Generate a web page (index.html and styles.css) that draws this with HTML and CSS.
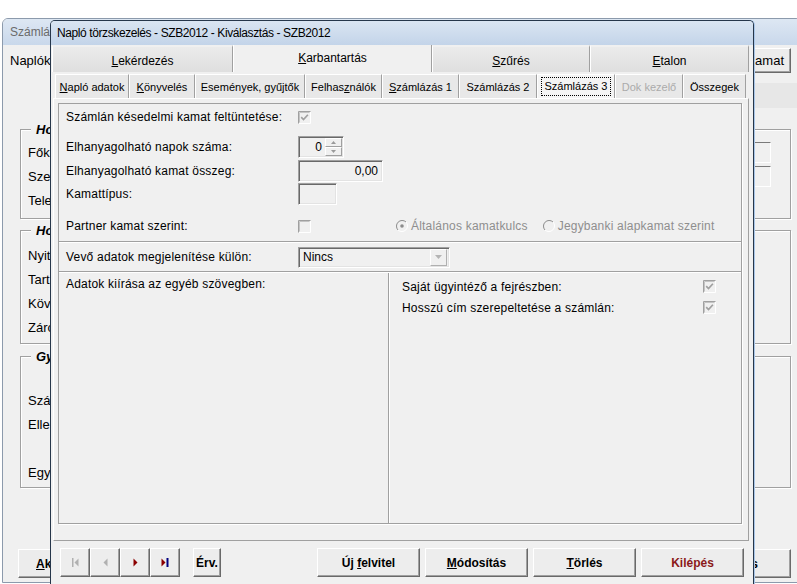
FILE: index.html
```html
<!DOCTYPE html>
<html lang="hu">
<head>
<meta charset="utf-8">
<title>Napló törzskezelés</title>
<link rel="stylesheet" href="styles.css">
</head>
<body>
<svg class="defs" aria-hidden="true">
  <defs>
    <symbol id="cbox" viewBox="0 0 13 13">
      <rect x="0" y="0" width="13" height="13" fill="#f0f0f0"/>
      <path d="M0.5 12.5V0.5H12.5" fill="none" stroke="#a0a0a0"/>
      <path d="M1.5 11.5V1.5H11.5" fill="none" stroke="#c4c4c4"/>
      <path d="M1 12.5H12.5V1" fill="none" stroke="#ffffff"/>
    </symbol>
    <symbol id="check" viewBox="0 0 13 13">
      <path d="M3.2 6.2l2.3 2.3 4.4-4.8" fill="none" stroke="#a0a0a0" stroke-width="1.7"/>
    </symbol>
    <symbol id="radio" viewBox="0 0 12 12">
      <path d="M10 2A5.66 5.66 0 0 0 2 10" fill="none" stroke="#8c8c8c"/>
      <path d="M2 10A5.66 5.66 0 0 0 10 2" fill="none" stroke="#ffffff"/>
    </symbol>
  </defs>
</svg>

<div class="bgwin">
  <div class="bg-title">Számláz</div>
  <div class="bg-top">
    <span class="bg-naplok">Naplók</span>
    <span class="bg-btn bg-kamat">Kamat</span>
  </div>
  <div class="bg-band"></div>
  <div class="gbox g1">
    <span class="glabel">Hoz</span>
    <div class="grows">
      <div class="grow"><span class="gl">Főkön</span><span class="gedit"></span></div>
      <div class="grow"><span class="gl">Szerk</span><span class="gedit"></span></div>
      <div class="grow"><span class="gl">Telef</span></div>
    </div>
  </div>
  <div class="gbox g2">
    <span class="glabel">Hoz</span>
    <div class="grows">
      <div class="grow"><span class="gl">Nyitó</span></div>
      <div class="grow"><span class="gl">Tarta</span></div>
      <div class="grow"><span class="gl">Köve</span></div>
      <div class="grow"><span class="gl">Záró</span></div>
    </div>
  </div>
  <div class="gbox g3">
    <span class="glabel">Gyű</span>
    <div class="grows">
      <div class="grow"><span class="gl">Szám</span></div>
      <div class="grow"><span class="gl">Ellen</span></div>
      <div class="grow"></div>
      <div class="grow"><span class="gl">Egyé</span></div>
    </div>
  </div>
  <div class="bg-btns">
    <span class="bg-btn bg-ak"><span><u>A</u>ktuális</span></span>
    <span class="bg-btn bg-kil"><span>Mentés</span></span>
  </div>
</div>

<div class="dialog">
  <div class="d-title">Napló törzskezelés - SZB2012 - Kiválasztás - SZB2012</div>

  <div class="tabs1">
    <div class="t1"><span><u>L</u>ekérdezés</span></div>
    <div class="t1 sel"><span><u>K</u>arbantartás</span></div>
    <div class="t1"><span><u>S</u>zűrés</span></div>
    <div class="t1"><span><u>E</u>talon</span></div>
  </div>

  <div class="tabs2">
    <div class="t2"><span><u>N</u>apló adatok</span></div>
    <div class="t2"><span><u>K</u>önyvelés</span></div>
    <div class="t2"><span>Események, gyűjtők</span></div>
    <div class="t2"><span>Felhas<u>z</u>nálók</span></div>
    <div class="t2"><span><u>S</u>zámlázás 1</span></div>
    <div class="t2"><span>Számlázás 2</span></div>
    <div class="t2 sel"><span>Számlázás 3</span></div>
    <div class="t2 dis"><span>Dok kezelő</span></div>
    <div class="t2"><span>Összegek</span></div>
  </div>

  <div class="page">
    <div class="panel">
      <div class="row r1">
        <span class="lbl">Számlán késedelmi kamat feltüntetése:</span>
        <svg class="cb" viewBox="0 0 13 13"><use href="#cbox"/><use href="#check"/></svg>
      </div>
      <div class="row r2">
        <span class="lbl">Elhanyagolható napok száma:</span>
        <span class="sunk spin">
          <span class="val">0</span>
          <span class="spbtns">
            <span class="spb"><svg width="5" height="3" viewBox="0 0 5 3"><path d="M0 3L2.5 0L5 3Z" fill="#9a9a9a"/></svg></span>
            <span class="spb"><svg width="5" height="3" viewBox="0 0 5 3"><path d="M0 0L2.5 3L5 0Z" fill="#9a9a9a"/></svg></span>
          </span>
        </span>
      </div>
      <div class="row r3">
        <span class="lbl">Elhanyagolható kamat összeg:</span>
        <span class="sunk edit">0,00</span>
      </div>
      <div class="row r4">
        <span class="lbl">Kamattípus:</span>
        <span class="sunk box"></span>
      </div>
      <div class="row r5">
        <span class="lbl">Partner kamat szerint:</span>
        <svg class="cb" viewBox="0 0 13 13"><use href="#cbox"/></svg>
        <span class="radios">
          <span class="ropt"><svg class="rd" viewBox="0 0 12 12"><use href="#radio"/><circle cx="6" cy="6" r="1.8" fill="#8c8c8c"/></svg><span>Általános kamatkulcs</span></span>
          <span class="ropt r2nd"><svg class="rd" viewBox="0 0 12 12"><use href="#radio"/></svg><span>Jegybanki alapkamat szerint</span></span>
        </span>
      </div>
      <div class="sep"></div>
      <div class="row r6">
        <span class="lbl">Vevő adatok megjelenítése külön:</span>
        <span class="sunk combo">
          <span>Nincs</span>
          <span class="ddbtn"><svg width="7" height="4" viewBox="0 0 7 4"><path d="M0 0H7L3.5 4Z" fill="#b4b4b4"/></svg></span>
        </span>
      </div>
      <div class="sep sep2"></div>
      <div class="lower">
        <div class="lower-left">Adatok kiírása az egyéb szövegben:</div>
        <div class="lower-right">
          <div class="crow">
            <span class="clbl">Saját ügyintéző a fejrészben:</span>
            <svg class="cb" viewBox="0 0 13 13"><use href="#cbox"/><use href="#check"/></svg>
          </div>
          <div class="crow">
            <span class="clbl">Hosszú cím szerepeltetése a számlán:</span>
            <svg class="cb" viewBox="0 0 13 13"><use href="#cbox"/><use href="#check"/></svg>
          </div>
        </div>
      </div>
    </div>
  </div>

  <div class="bar">
    <span class="btn nav"><svg width="7" height="9" viewBox="0 0 7 9"><rect x="0" y="0" width="1.5" height="9" fill="#b0b0b0"/><path d="M6.5 0.5V8.5L2.5 4.5Z" fill="#b0b0b0"/></svg></span>
    <span class="btn nav"><svg width="5" height="9" viewBox="0 0 5 9"><path d="M4.5 0.5V8.5L0.5 4.5Z" fill="#b0b0b0"/></svg></span>
    <span class="btn nav"><svg width="5" height="9" viewBox="0 0 5 9"><path d="M0.5 0.5V8.5L4.5 4.5Z" fill="#8b0000"/></svg></span>
    <span class="btn nav"><svg width="8" height="9" viewBox="0 0 8 9"><path d="M0.5 0.5V8.5L4.5 4.5Z" fill="#8b0000"/><rect x="5.5" y="0" width="2" height="9" fill="#000080"/></svg></span>
    <span class="btn erv"><span>Érv.</span></span>
    <span class="btn act first"><span>Új <u>f</u>elvitel</span></span>
    <span class="btn act"><span><u>M</u>ódosítás</span></span>
    <span class="btn act"><span><u>T</u>örlés</span></span>
    <span class="btn act exit"><span>Kilépés</span></span>
  </div>
</div>
</body>
</html>
```

FILE: styles.css
```css
* { box-sizing: border-box; margin: 0; padding: 0; }
html, body { width: 797px; height: 584px; overflow: hidden; }
body {
  position: relative;
  background: #ffffff;
  font-family: "Liberation Sans", Arial, sans-serif;
  font-size: 12px;
  color: #000;
}
u { text-decoration: underline; text-underline-offset: 1px; }
.defs { position: absolute; width: 0; height: 0; overflow: hidden; }

/* ---------- background window ---------- */
.bgwin {
  position: absolute;
  left: 2px;
  top: 18px;
  width: 800px;
  height: 565px;
  background: #f0f0f0;
  border: 1px solid #8c9aac;
  border-radius: 6px 6px 0 0;
  overflow: hidden;
}
.bg-title {
  height: 26px;
  line-height: 26px;
  padding-left: 7px;
  color: #6b6b6b;
  background: linear-gradient(#dde7f3, #c9d8eb);
}
.bg-top {
  height: 38px;
  display: flex;
  justify-content: space-between;
  align-items: flex-start;
  padding: 3px 10px 0 7px;
}
.bg-naplok { font-size: 13px; line-height: 25px; }
.bg-btn {
  display: flex;
  align-items: center;
  justify-content: center;
  background: #ececec;
  border: 1px solid;
  border-color: #ffffff #6a6a6a #6a6a6a #ffffff;
  box-shadow: inset -1px -1px #a0a0a0;
}
.bg-kamat {
  width: 90px;
  height: 25px;
  font-size: 13px;
  justify-content: flex-end;
  padding-right: 6px;
}
.bg-band {
  height: 25px;
  width: 50px;
  margin-left: auto;
  background: #e7e7e7;
}
.gbox {
  margin: 0 10px 0 17px;
  border: 1px solid #a0a0a0;
  box-shadow: inset 1px 1px #ffffff, 1px 1px #ffffff;
}
.glabel {
  display: block;
  width: max-content;
  margin: -8px 0 0 10px;
  padding: 0 4px 0 5px;
  background: #f0f0f0;
  font-weight: bold;
  font-style: italic;
  font-size: 13px;
  line-height: 15px;
}
.grow {
  display: flex;
  align-items: center;
  justify-content: space-between;
  height: 24px;
  padding-left: 7px;
  font-size: 13px;
}
.gl { white-space: nowrap; }
.g1 { margin-top: 21px; height: 90px; }
.g1 .grows { margin-top: 4px; }
.g1 .grow { height: 22px; margin-bottom: 2px; }
.g2 { margin-top: 11px; height: 114px; }
.g2 .grows { margin-top: 5px; }
.g3 { margin-top: 12px; height: 132px; }
.g3 .grows { margin-top: 24px; }
.gedit {
  width: 150px;
  height: 21px;
  margin-right: 19px;
  border: 1px solid;
  border-color: #7a7a7a #ffffff #ffffff #7a7a7a;
}
.bg-btns {
  margin-top: 61px;
  display: flex;
  justify-content: space-between;
  padding: 0 10px 0 15px;
}
.bg-ak, .bg-kil { height: 29px; font-weight: bold; }
.bg-ak { width: 80px; justify-content: flex-start; padding-left: 17px; }
.bg-kil { width: 111px; justify-content: flex-end; padding-right: 32px; }

/* ---------- dialog ---------- */
.dialog {
  position: absolute;
  left: 50px;
  top: 20px;
  width: 704px;
  height: 564px;
  background: #f0f0f0;
  border: 1px solid #26364a;
  border-bottom: none;
  border-radius: 5px 5px 0 0;
  box-shadow: 1px 0 0 #a9c6e8;
  display: flex;
  flex-direction: column;
  overflow: hidden;
}
.d-title {
  flex: none;
  height: 24px;
  line-height: 24px;
  padding-left: 6px;
  letter-spacing: -0.4px;
  background: linear-gradient(#dae5f2, #c3d4e9);
}

.tabs1 {
  flex: none;
  display: grid;
  grid-template-columns: 181px 199px 158px 159px;
  height: 27px;
  margin-left: 1px;
}
.t1 {
  display: flex;
  align-items: center;
  justify-content: center;
  padding-top: 2px;
  background: linear-gradient(#ebebeb, #dfdfdf);
  border-top: 2px solid #f0f0f0;
  border-left: 1px solid #ffffff;
  border-right: 1px solid #a0a0a0;
}
.t1.sel {
  background: #f0f0f0;
  border-top: 0;
  padding-top: 0;
  padding-bottom: 1px;
}

.tabs2 {
  flex: none;
  display: grid;
  grid-template-columns: 74px 66px 110px 77px 77px 78px 78px 68px 63px;
  height: 24px;
  margin: 2px 0 0 4px;
  font-size: 11px;
}
.t2 {
  display: flex;
  align-items: center;
  justify-content: center;
  background: #e8e8e8;
  border-top: 1px solid #ffffff;
  border-left: 1px solid #ffffff;
  border-right: 1px solid #a0a0a0;
}
.t2.sel { background: #f4f4f4; }
.t2.sel span {
  outline: 1px dotted #000;
  outline-offset: 0;
  padding: 2px 3px;
  line-height: 13px;
}
.t2.dis { color: #ababab; }

.page {
  flex: none;
  margin-left: 2px;
  width: 696px;
  height: 443px;
  border: 1px solid;
  border-color: #ffffff #a0a0a0 #a0a0a0 #ffffff;
  padding: 4px 6px 0 4px;
}
.panel {
  height: 421px;
  border: 1px solid #a0a0a0;
  box-shadow: 1px 1px 0 #ffffff;
  display: flex;
  flex-direction: column;
  letter-spacing: 0.2px;
}
.row {
  flex: none;
  display: flex;
  align-items: center;
  padding-left: 7px;
}
.lbl { width: 232px; flex: none; }
.r1 { height: 26px; }
.r2 { height: 22px; margin-top: 6px; }
.r3 { height: 22px; margin-top: 2px; }
.r4 { height: 22px; margin-top: 1px; }
.r5 { height: 26px; margin-top: 8px; }
.r6 { height: 28px; }
.sep {
  flex: none;
  height: 2px;
  margin-top: 2px;
  border-top: 1px solid #a0a0a0;
  border-bottom: 1px solid #ffffff;
}
.sep2 { margin-top: 0; }

.cb { width: 13px; height: 13px; display: block; flex: none; }
.rd { width: 12px; height: 12px; display: block; flex: none; }

.sunk {
  display: flex;
  align-items: center;
  height: 22px;
  border: 1px solid;
  border-color: #a0a0a0 #ffffff #ffffff #a0a0a0;
  box-shadow: inset 1px 1px #696969, inset -1px -1px #e3e3e3;
  letter-spacing: 0;
}
.spin { width: 46px; justify-content: flex-end; padding: 1px 1px 1px 0; }
.spin .val { padding-right: 3px; }
.spbtns { display: flex; flex-direction: column; height: 18px; }
.spb {
  width: 17px;
  height: 9px;
  display: flex;
  align-items: center;
  justify-content: center;
  background: #f0f0f0;
  border: 1px solid;
  border-color: #ffffff #a0a0a0 #a0a0a0 #ffffff;
}
.edit { width: 85px; justify-content: flex-end; padding-right: 4px; }
.box { width: 39px; }
.combo { width: 152px; height: 21px; padding: 1px 2px 1px 4px; }
.ddbtn {
  margin-left: auto;
  width: 17px;
  height: 17px;
  display: flex;
  align-items: center;
  justify-content: center;
  background: #f0f0f0;
  border: 1px solid;
  border-color: #ffffff #b0b0b0 #b0b0b0 #ffffff;
}

.radios {
  display: flex;
  align-items: center;
  margin-left: 85px;
  color: #8e8e8e;
}
.ropt { display: flex; align-items: center; gap: 3px; }
.r2nd { margin-left: 15px; }

.lower { flex: 1; display: flex; }
.lower-left {
  width: 330px;
  padding: 4px 0 0 7px;
  line-height: 15px;
  border-right: 1px solid #a0a0a0;
}
.lower-right {
  flex: 1;
  border-left: 1px solid #ffffff;
  padding: 3px 0 0 12px;
}
.crow { display: flex; align-items: center; height: 21px; }
.clbl { width: 301px; }

/* ---------- bottom bar ---------- */
.bar {
  flex: 1;
  display: flex;
  align-items: flex-start;
  padding: 7px 0 0 9px;
}
.btn {
  height: 29px;
  display: flex;
  align-items: center;
  justify-content: center;
  background: #ededed;
  border: 1px solid;
  border-color: #ffffff #696969 #696969 #ffffff;
  box-shadow: inset -1px -1px #a0a0a0;
  font-weight: bold;
}
.nav { width: 30px; }
.erv { width: 28px; margin-left: 13px; }
.act { width: 103px; margin-left: 5px; }
.act.first { margin-left: 96px; }
.exit { color: #8b1a1a; }
```
